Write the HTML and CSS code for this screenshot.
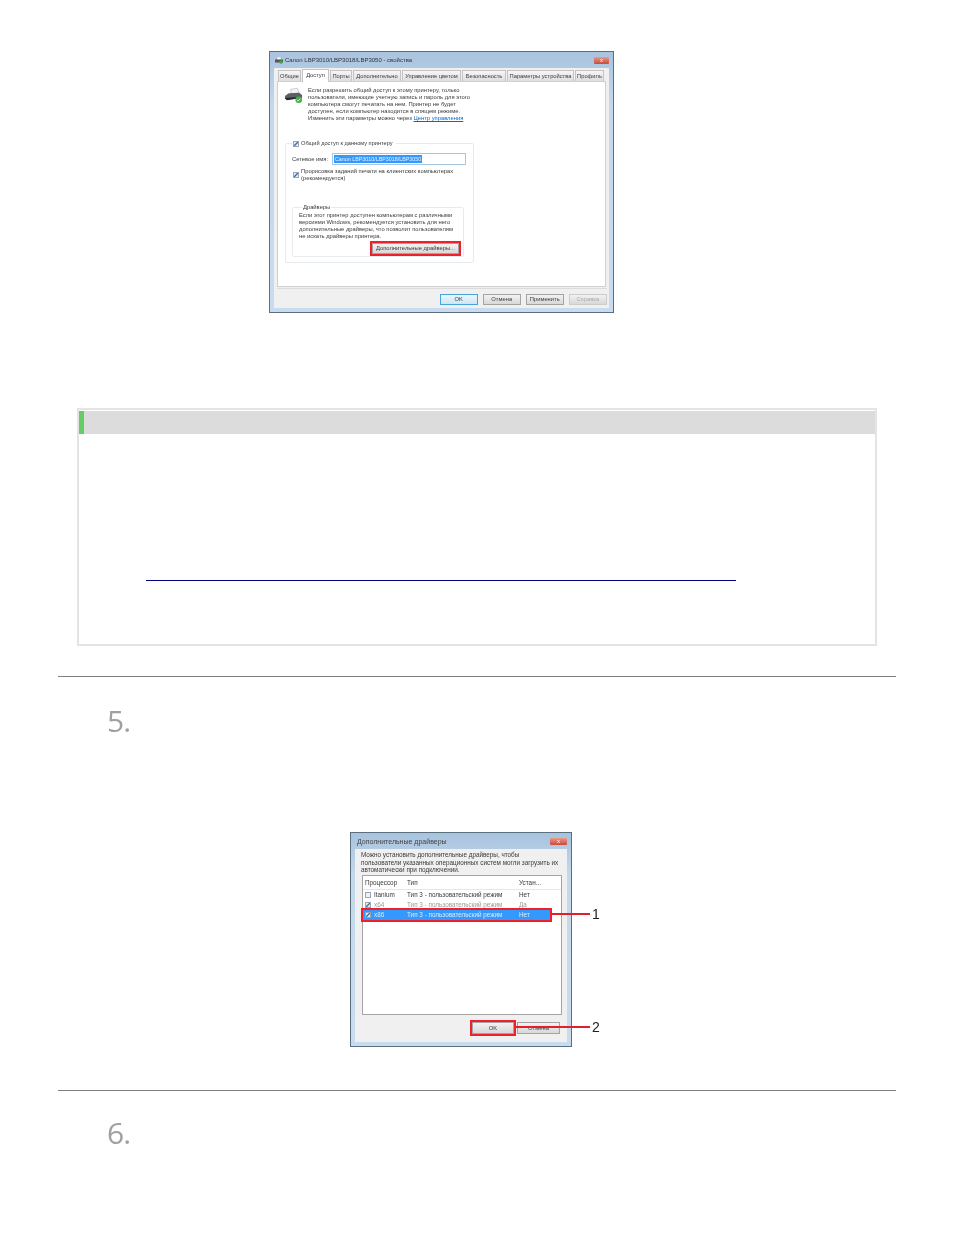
FILE: index.html
```html
<!DOCTYPE html>
<html lang="ru">
<head>
<meta charset="utf-8">
<title>Canon LBP3010</title>
<link rel="stylesheet" href="styles.css">
</head>
<body>
<main class="doc">
  <figure class="fig fig-a">
    <div class="win win-a">
      <div class="titlebar">
        <svg class="title-icon" viewBox="0 0 8 7"><rect x="2" y="0" width="4" height="3" fill="#fff" stroke="#999" stroke-width=".5"/><rect x="0" y="2.5" width="8" height="3" fill="#555"/><circle cx="6" cy="5" r="1.8" fill="#3da83d"/></svg>
        <span class="title-text">Canon LBP3010/LBP3018/LBP3050 - свойства</span>
        <span class="close close-a">x</span>
      </div>
      <div class="client">
        <div class="tabs">
          <span class="tab t1">Общие</span>
          <span class="tab t2 active">Доступ</span>
          <span class="tab t3">Порты</span>
          <span class="tab t4">Дополнительно</span>
          <span class="tab t5">Управление цветом</span>
          <span class="tab t6">Безопасность</span>
          <span class="tab t7">Параметры устройства</span>
          <span class="tab t8">Профиль</span>
        </div>
        <div class="panel">
          <div class="intro">
            <svg class="printer" viewBox="0 0 20 17"><path d="M7 2l7-1 2 5-8 1z" fill="#f4f4f4" stroke="#aaa" stroke-width=".6"/><path d="M1 9l4-3 11-.5 3 2.5v3L3 13l-2-1z" fill="#5a6066"/><path d="M1 11l15-1 2 1-15 2.5z" fill="#24282c"/><circle cx="15.5" cy="13" r="3.5" fill="#3fb13f"/><path d="M13.7 13l1.3 1.4 2.2-2.6" stroke="#fff" stroke-width=".9" fill="none"/></svg>
            <p class="intro-text">Если разрешить общий доступ к этому принтеру, только<br>пользователи, имеющие учетную запись и пароль для этого<br>компьютера смогут печатать на нем. Принтер не будет<br>доступен, если компьютер находится в спящем режиме.<br>Изменить эти параметры можно через <a class="mini-link">Центр управления</a></p>
          </div>
          <fieldset class="group">
            <legend class="legend"><span class="check on"></span>Общий доступ к данному принтеру</legend>
            <div class="name-row">
              <span class="name-label">Сетевое имя:</span>
              <span class="input"><span class="selected">Canon LBP3010/LBP3018/LBP3050</span></span>
            </div>
            <div class="render-row">
              <span class="check on"></span>
              <span class="render-text">Прорисовка заданий печати на клиентских компьютерах<br>(рекомендуется)</span>
            </div>
            <fieldset class="drivers">
              <legend class="drivers-legend">Драйверы</legend>
              <p class="drivers-text">Если этот принтер доступен компьютерам с различными<br>версиями Windows, рекомендуется установить для него<br>дополнительные драйверы, что позволит пользователям<br>не искать драйверы принтера.</p>
              <div class="drivers-action"><span class="btn marked more">Дополнительные драйверы...</span></div>
            </fieldset>
          </fieldset>
        </div>
        <div class="footer">
          <span class="btn default">OK</span>
          <span class="btn">Отмена</span>
          <span class="btn">Применить</span>
          <span class="btn disabled">Справка</span>
        </div>
      </div>
    </div>
  </figure>

  <section class="note">
    <div class="note-head"></div>
    <div class="note-body"><span class="note-link"></span></div>
  </section>

  <section class="step">
    <div class="step-num">5.</div>
    <figure class="fig fig-b">
      <div class="win win-b">
        <div class="titlebar">
          <span class="title-text title-b">Дополнительные драйверы</span>
          <span class="close close-b">x</span>
        </div>
        <div class="client client-b">
          <p class="b-text">Можно установить дополнительные драйверы, чтобы<br>пользователи указанных операционных систем могли загрузить их<br>автоматически при подключении.</p>
          <div class="list">
            <div class="row head"><span>Процессор</span><span>Тип</span><span>Устан...</span></div>
            <div class="row"><span><i class="check"></i>Itanium</span><span>Тип 3 - пользовательский режим</span><span>Нет</span></div>
            <div class="row dim"><span><i class="check on"></i>x64</span><span>Тип 3 - пользовательский режим</span><span>Да</span></div>
            <div class="row sel"><span><i class="check on"></i>x86</span><span>Тип 3 - пользовательский режим</span><span>Нет</span></div>
          </div>
          <div class="b-footer">
            <span class="btn marked ok-b">OK</span>
            <span class="btn cancel-b">Отмена</span>
          </div>
        </div>
      </div>
      <div class="callout c1"><span class="c-line"></span><span class="c-num">1</span></div>
      <div class="callout c2"><span class="c-line"></span><span class="c-num">2</span></div>
    </figure>
  </section>

  <section class="step step-last">
    <div class="step-num">6.</div>
  </section>
</main>
</body>
</html>
```
FILE: styles.css
```css
* { box-sizing: border-box; }
html, body { margin: 0; padding: 0; background: #fff; }
body { font-family: "Liberation Sans", Arial, sans-serif; }
.doc { width: 954px; height: 1235px; padding: 51px 58px 0; overflow: hidden; }
.fig { margin: 0; position: relative; }
.fig-a { margin-left: 211px; width: 345px; }
.fig-b { margin: 91px 0 0 292px; width: 222px; }

/* window chrome */
.win { border: 1px solid #5a6f80; background: linear-gradient(#a9c3de, #c4d8ec 20%, #c9dcef); color: #3a3a3a; font-size: 5.8px; line-height: 7px; filter: blur(.7px); display: flex; flex-direction: column; }
.win-a { width: 345px; height: 262px; }
.win-b { width: 222px; height: 215px; font-size: 6.35px; }
.titlebar { height: 16px; flex: none; display: flex; align-items: center; padding: 0 4px 0 5px; font-size: 6px; color: #333; }
.title-icon { width: 8px; height: 7px; margin-right: 2px; }
.title-text { flex: 1; }
.title-b { font-size: 7px; padding-left: 1px; color: #444; }
.close { color: #fff; background: linear-gradient(#e89a8a, #c94a3a); border-radius: 1px; text-align: center; font-size: 6px; line-height: 7px; height: 7px; }
.close-a { width: 15px; }
.close-b { width: 17px; }
.client { flex: 1; margin: 0 4px 4px; background: #f0f0f0; padding: 1px 3px 0; display: flex; flex-direction: column; }
.client-b { padding: 0 5px; }

/* tabs */
.tabs { display: flex; height: 12px; gap: 1px; padding-left: 1px; align-items: flex-end; flex: none; }
.tab { flex: none; height: 11px; line-height: 11px; text-align: center; background: linear-gradient(#f6f6f6, #dedede); border: 1px solid #c4c4c4; border-bottom: 0; white-space: nowrap; font-size: 5.75px; }
.tab.active { height: 13px; background: #fff; margin-bottom: -1px; position: relative; z-index: 1; }
.t1 { width: 23px; } .t2 { width: 27px; } .t3 { width: 22px; } .t4 { width: 48px; }
.t5 { width: 59px; } .t6 { width: 44px; } .t7 { width: 67px; } .t8 { width: 29px; }

.panel { flex: 206px 0 0; background: #fff; border: 1px solid #d0d0d0; padding: 5px 0 0 6px; }
.intro { display: flex; }
.printer { width: 19px; height: 17px; margin-right: 5px; flex: none; }
.intro-text { margin: 0; white-space: nowrap; }
.mini-link { color: #0a66cc; text-decoration: underline; }

/* group boxes */
.group { margin: 18px 0 0 1px; padding: 0 0 6px 6px; width: 189px; height: 123px; border: 1px solid #e8ebee; border-radius: 2px; min-width: 0; }
.legend { padding: 0 3px 0 1px; line-height: 7px; white-space: nowrap; display: flex; align-items: center; gap: 2px; font-size: 5.65px; }
.check { display: inline-block; width: 6px; height: 6px; border: 1px solid #9aa6b4; background: #eef2f6; flex: none; position: relative; vertical-align: middle; }
.check.on { background: linear-gradient(135deg, transparent 30%, #3a6fb5 45%, #3a6fb5 55%, transparent 70%), #e6ecf3; }
.name-row { display: flex; align-items: center; margin-top: 6px; height: 12px; }
.name-label { width: 40px; flex: none; }
.input { width: 134px; height: 12px; border: 1px solid #a8c8e0; background: #fff; padding: 1px 0 0 1px; line-height: 8px; white-space: nowrap; }
.selected { background: #3399ff; color: #e6f0ff; display: inline-block; height: 8px; font-size: 5.35px; padding: 0 1px; }
.render-row { display: flex; align-items: center; gap: 2px; margin-top: 3px; padding-left: 1px; white-space: nowrap; line-height: 6.5px; }
.drivers { margin: 23px 0 0; padding: 1px 4px 3px 6px; width: 172px; height: 53px; border: 1px solid #e8ebee; border-radius: 2px; min-width: 0; }
.drivers-legend { padding: 0 1px; margin-left: 3px; line-height: 7px; }
.drivers-text { margin: 0; white-space: nowrap; }
.drivers-action { display: flex; justify-content: flex-end; margin-top: 3px; }

/* buttons */
.btn { display: inline-block; height: 11px; line-height: 9px; text-align: center; background: linear-gradient(#f2f2f2, #d8d8d8); border: 1px solid #a4a4a4; border-radius: 0; font-size: 5.8px; white-space: nowrap; }
.marked { outline: 2px solid #f0202a; }
.more { width: 87px; }
.footer { display: flex; justify-content: flex-end; gap: 4.5px; padding: 5px 0 0; border-top: 1px solid #dcdcdc; margin-top: 1px; margin-right: -1px; }
.footer .btn { width: 38.5px; }
.default { border-color: #4aa3d8; background: linear-gradient(#eaf6fc, #cfe6f3); }
.disabled { color: #aaa; border-color: #ccc; }

/* second dialog */
.b-text { margin: 2px 0 0 1px; line-height: 7.6px; white-space: nowrap; }
.list { margin: 1px 0 0 2px; width: 200px; height: 140px; border: 1px solid #a4a4a4; background: #fff; flex: none; }
.row { display: grid; grid-template-columns: 42px 112px 1fr; height: 10px; line-height: 10px; padding-left: 2px; margin-right: 11px; white-space: nowrap; }
.row span { display: flex; align-items: center; gap: 3px; }
.row.head { height: 14px; margin-right: 0; line-height: 14px; border-bottom: 1px solid #e6e6e6; }
.row.dim { color: #9a9a9a; }
.row.sel { background: #3399ff; color: #dbeaff; outline: 2px solid #f0202a; }
.b-footer { display: flex; gap: 3px; padding: 7px 0 0 112px; }
.ok-b { width: 42px; height: 12px; line-height: 10px; }
.cancel-b { width: 43px; height: 12px; line-height: 10px; }

/* callouts */
.callout { position: absolute; display: flex; align-items: center; color: #222; font-size: 14px; line-height: 14px; filter: blur(.3px); }
.c1 { left: 201px; top: 75px; }
.c2 { left: 166px; top: 188px; }
.c-line { display: block; height: 2px; background: #e0202a; }
.c1 .c-line { width: 39px; }
.c2 .c-line { width: 74px; }
.c-num { margin-left: 2px; }

/* note box */
.note { margin: 95px 0 0 19px; width: 800px; height: 238px; border: 2px solid #e4e4e4; padding-top: 1px; }
.note-head { height: 23px; background: #dcdcdc; border-left: 5px solid #66cc66; }
.note-body { padding: 146px 0 0 67px; }
.note-link { display: block; width: 590px; height: 1px; background: #000080; }

/* steps */
.step { margin-top: 30px; border-top: 1px solid #808080; padding-top: 24px; }
.step + .step { margin-top: 43px; }
.step-last { padding-top: 22px; }
.step-num { font-family: "Open Sans", sans-serif; font-weight: 400; font-size: 30px; line-height: 40px; letter-spacing: -1px; color: #a0a0a0; padding-left: 49px; filter: blur(.4px); }
```
